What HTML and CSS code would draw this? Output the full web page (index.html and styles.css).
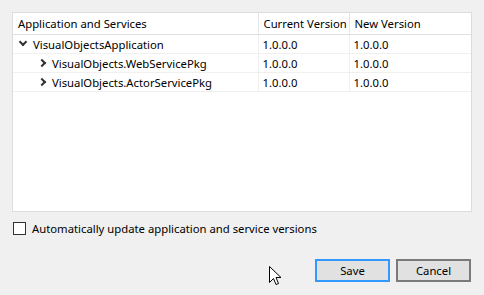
FILE: index.html
```html
<!DOCTYPE html>
<html lang="en">

<head>
    <meta charset="UTF-8">
    <title>Upgrade Versions</title>
    <link rel="stylesheet" href="styles.css">
</head>

<body>
    <div class="panel">
        <table class="versions">
            <colgroup>
                <col class="col-name">
                <col class="col-cur">
                <col>
            </colgroup>
            <thead>
                <tr>
                    <th>Application and Services</th>
                    <th>Current Version</th>
                    <th>New Version</th>
                </tr>
            </thead>
            <tbody>
                <tr>
                    <td class="name lvl0"><span class="arrow down"></span>VisualObjectsApplication</td>
                    <td>1.0.0.0</td>
                    <td>1.0.0.0</td>
                </tr>
                <tr>
                    <td class="name lvl1"><span class="arrow right"></span>VisualObjects.WebServicePkg</td>
                    <td>1.0.0.0</td>
                    <td>1.0.0.0</td>
                </tr>
                <tr>
                    <td class="name lvl1"><span class="arrow right"></span>VisualObjects.ActorServicePkg</td>
                    <td>1.0.0.0</td>
                    <td>1.0.0.0</td>
                </tr>
            </tbody>
        </table>
    </div>

    <label class="check">
        <span class="box"></span>
        Automatically update application and service versions
    </label>

    <div class="buttons">
        <button class="btn default">Save</button>
        <button class="btn">Cancel</button>
    </div>

    <svg class="cursor" width="13" height="20" viewBox="0 0 13 20">
        <path d="M0.5 0.5 L0.5 16.5 L4.5 12.5 L7 18.5 L9.5 17.5 L7 11.5 L12 11.5 Z" fill="#fff" stroke="#000" stroke-width="1" />
    </svg>
</body>

</html>
```

FILE: styles.css
```css
body {
    font-family: 'Noto Sans', 'Open Sans', sans-serif;
    font-size: 11.3px;
    margin: 0;
    padding: 0;
    background-color: #f0f0f0;
    color: #000;
    width: 484px;
    height: 295px;
    position: relative;
    overflow: hidden;
}

.panel {
    margin: 12px 0 0 12px;
    width: 458px;
    height: 198px;
    background-color: #fff;
    border: 1px solid #dcdcdc;
}

.versions {
    border-collapse: collapse;
    width: 100%;
    table-layout: fixed;
}

.col-name {
    width: 245px;
}

.col-cur {
    width: 91px;
}

.versions th {
    height: 21px;
    padding: 0 0 0 5px;
    text-align: left;
    font-weight: normal;
    border-bottom: 1px solid #e0e0e0;
    border-right: 1px solid #e5e5e5;
    white-space: nowrap;
    overflow: hidden;
}

.versions th:last-child,
.versions td:last-child {
    border-right: none;
}

.versions td {
    height: 18px;
    padding: 0 0 0 4px;
    border-bottom: 1px solid #f0f0f0;
    border-right: 1px solid #f0f0f0;
    white-space: nowrap;
}

.name.lvl0 {
    padding-left: 6px;
}

.name.lvl1 {
    padding-left: 26px;
}

.arrow {
    display: inline-block;
    width: 4px;
    height: 4px;
    border-right: 2px solid #333;
    border-bottom: 2px solid #333;
    margin-right: 7px;
    vertical-align: middle;
}

.arrow.down {
    transform: translateY(-3px) rotate(45deg);
    margin-left: 1px;
}

.arrow.right {
    transform: translateY(-1px) rotate(-45deg);
}

.check {
    display: flex;
    align-items: center;
    gap: 6px;
    margin: 9px 0 0 13px;
    height: 14px;
}

.box {
    width: 11px;
    height: 11px;
    border: 1px solid #333;
    background-color: #fff;
}

.buttons {
    display: flex;
    justify-content: flex-end;
    gap: 6px;
    margin: 24px 13px 0 0;
}

.btn {
    font-family: inherit;
    font-size: 11.3px;
    width: 75px;
    height: 23px;
    padding: 0;
    background-color: #e1e1e1;
    border: 2px solid #7a7a7a;
    color: #000;
}

.btn.default {
    border-color: #3399ff;
}

.cursor {
    position: absolute;
    left: 269px;
    top: 266px;
}
```
